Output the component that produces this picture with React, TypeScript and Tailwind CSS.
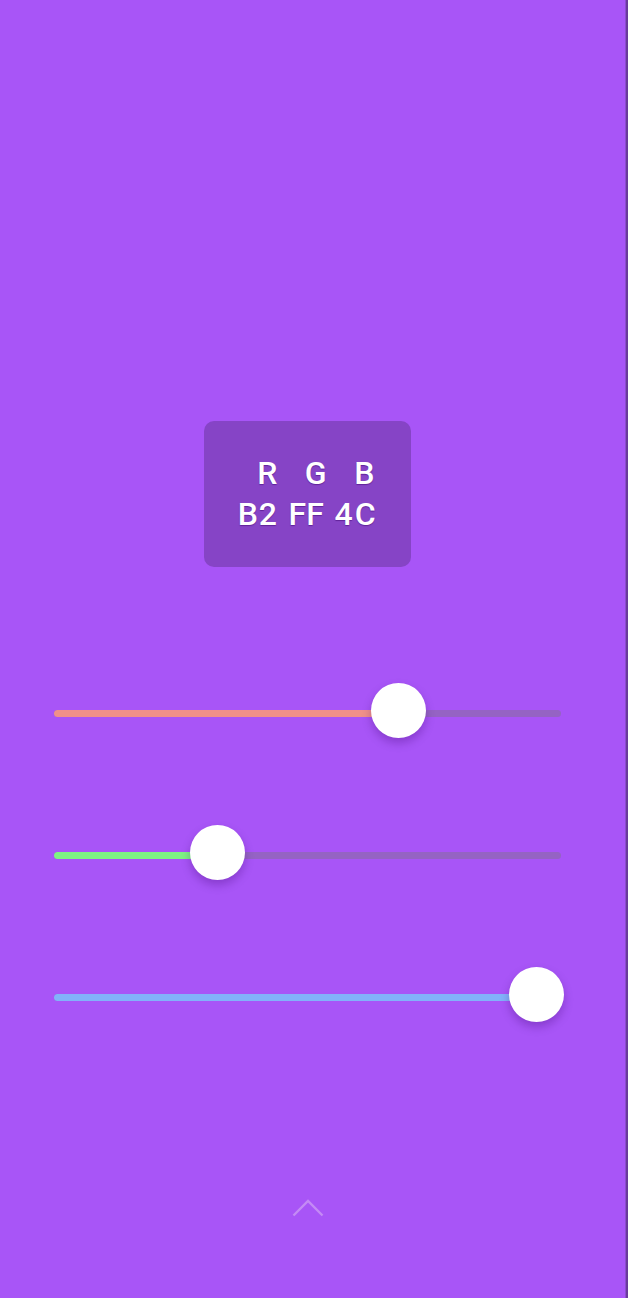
import React from "react";

const sliders = [
  { fill: "bg-[#f0908a]", value: 344, key: "r" },
  { fill: "bg-[#7ef483]", value: 163, key: "g" },
  { fill: "bg-[#82b2fa]", value: 482, key: "b" },
];

function Slider({ fill, value }: { fill: string; value: number }) {
  return (
    <div className="relative h-[56px] w-[507px]">
      <div className="absolute left-0 right-0 top-[27px] h-[7px] rounded-full bg-[#9563c4]">
        <div
          className={`h-full rounded-full ${fill}`}
          style={{ width: value }}
        />
      </div>
      <div
        className="absolute top-0 h-[55px] w-[55px] rounded-full bg-white shadow-[0_5px_10px_rgba(60,0,110,0.3)]"
        style={{ left: value - 27 }}
      />
    </div>
  );
}

export default function App() {
  return (
    <div
      className="flex h-[1298px] w-full overflow-hidden bg-[#a855f7]"
      style={{ fontFamily: "Roboto, 'Noto Sans', sans-serif" }}
    >
      <div className="flex w-[615px] flex-col items-center pt-[421px]">
        {/* value box */}
        <div className="flex h-[146px] w-[207px] items-center justify-center rounded-[10px] bg-[#8644c6]">
          <div className="grid grid-cols-[40px_35px_43px] gap-x-[11px] text-right text-[32px] font-medium leading-[41px] text-white [text-shadow:0_1px_1px_rgba(60,0,110,0.5)]">
            <span>R</span>
            <span className="mr-[-3px]">G</span>
            <span className="mr-[3px]">B</span>
            <span className="tracking-[0.02em]">B2</span>
            <span>FF</span>
            <span className="tracking-[0.06em] text-center">4C</span>
          </div>
        </div>

        {/* sliders */}
        <div className="mt-[116px] flex flex-col gap-[86px]">
          {sliders.map((s) => (
            <Slider key={s.key} fill={s.fill} value={s.value} />
          ))}
        </div>

        <svg
          className="mt-[176px]"
          width="32"
          height="18"
          viewBox="0 0 32 18"
          fill="none"
        >
          <path
            d="M1.5 16.5 L16 2 L30.5 16.5"
            stroke="#c48af5"
            strokeWidth="2.4"
          />
        </svg>
      </div>
      <div className="flex-1" />
      <div className="w-px bg-[#8c4bcf]" />
      <div className="w-[2px] bg-[#6a3a9c]" />
    </div>
  );
}
